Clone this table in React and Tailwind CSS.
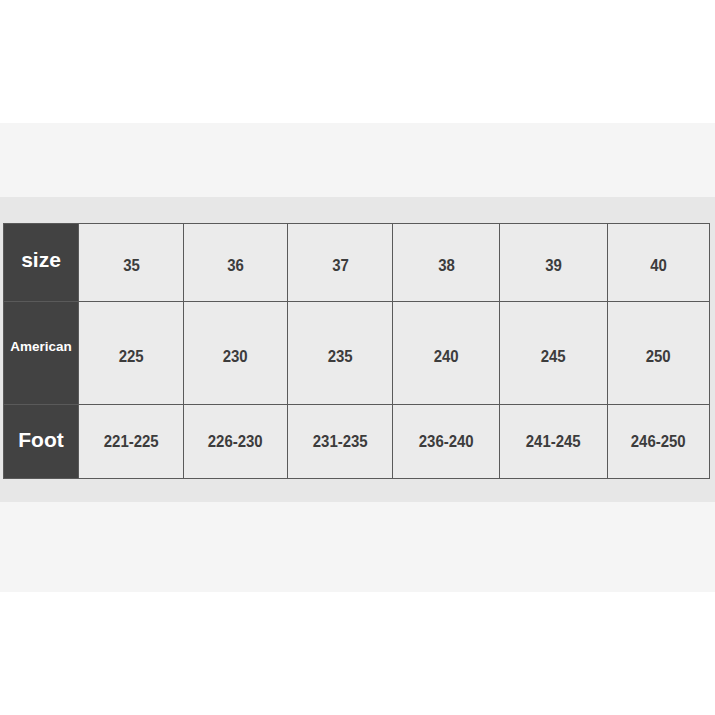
const cols = [
  { w: 'w-[105px]', size: '35', us: '225', foot: '221-225' },
  { w: 'w-[104px]', size: '36', us: '230', foot: '226-230' },
  { w: 'w-[105px]', size: '37', us: '235', foot: '231-235' },
  { w: 'w-[107px]', size: '38', us: '240', foot: '236-240' },
  { w: 'w-[108px]', size: '39', us: '245', foot: '241-245' },
  { w: 'w-[102px]', size: '40', us: '250', foot: '246-250' },
];

function Cell({ w, children, className = '' }) {
  return (
    <div className={`${w} shrink-0 border-l border-[#5a5a5a] flex items-center justify-center text-[17px] font-semibold text-[#3c3c3c] ${className}`}>
      <span className="inline-block scale-x-[0.88]">{children}</span>
    </div>
  );
}

export default function App() {
  return (
    <div className="w-[715px] h-[715px] bg-white flex flex-col font-['Liberation_Sans',Arial,sans-serif]">
      <div className="h-[123px]" />
      <div className="h-[74px] bg-[#f5f5f5]" />
      <div className="h-[305px] bg-[#e7e7e7] pt-[26px] pl-[3px]">
        <div className="w-[707px] border border-[#5a5a5a] flex flex-col bg-[#ebebeb]">
          {/* size row */}
          <div className="h-[78px] flex border-b border-[#5a5a5a]">
            <div className="w-[74px] shrink-0 bg-[#424242] flex items-center justify-center pb-[5px]">
              <span className="text-white font-bold text-[21px]">size</span>
            </div>
            {cols.map((c) => (
              <Cell key={c.size} w={c.w} className="pt-[6px]">{c.size}</Cell>
            ))}
          </div>
          {/* American row */}
          <div className="h-[103px] flex border-b border-[#5a5a5a]">
            <div className="w-[74px] shrink-0 bg-[#424242] flex items-center justify-center pb-[12px]">
              <span className="text-white font-bold text-[13.5px]">American</span>
            </div>
            {cols.map((c) => (
              <Cell key={c.us} w={c.w} className="pt-[8px]">{c.us}</Cell>
            ))}
          </div>
          {/* Foot row */}
          <div className="h-[73px] flex">
            <div className="w-[74px] shrink-0 bg-[#424242] flex items-center justify-center pb-[4px]">
              <span className="text-white font-bold text-[21px]">Foot</span>
            </div>
            {cols.map((c) => (
              <Cell key={c.foot} w={c.w}>{c.foot}</Cell>
            ))}
          </div>
        </div>
      </div>
      <div className="h-[90px] bg-[#f5f5f5]" />
      <div className="flex-1 bg-white" />
    </div>
  );
}
